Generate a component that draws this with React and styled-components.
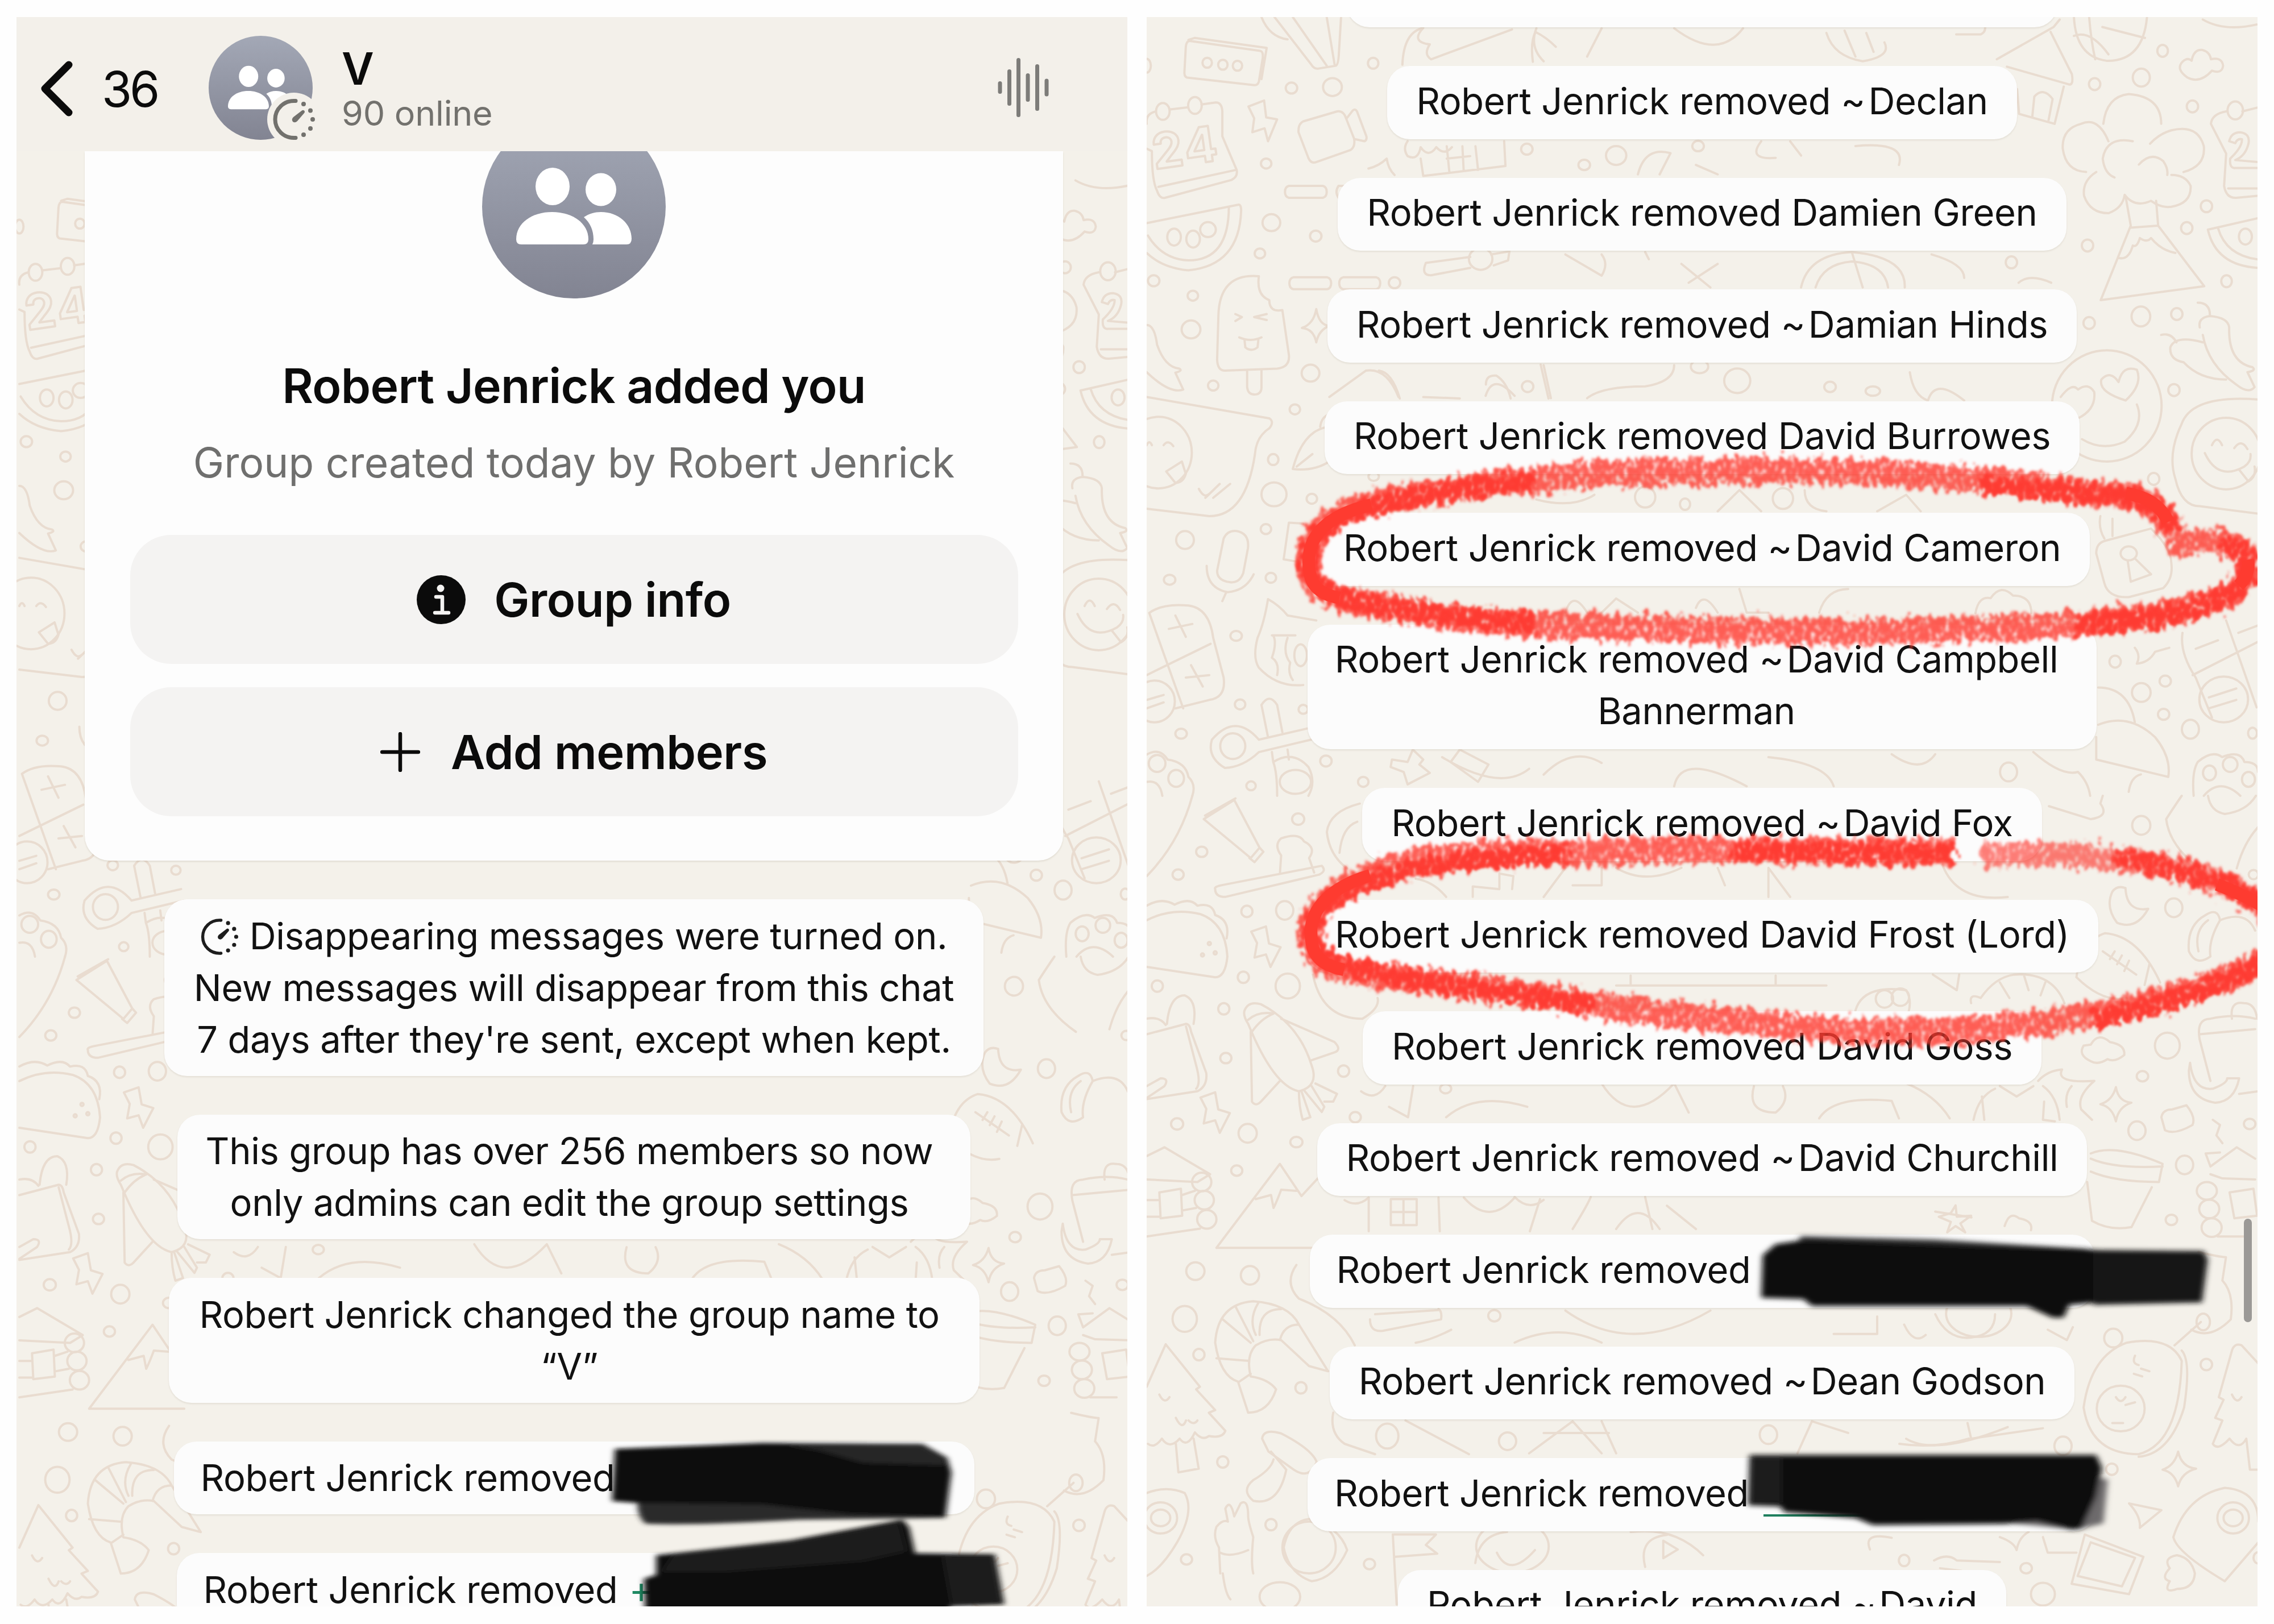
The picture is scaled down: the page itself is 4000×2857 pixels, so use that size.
/*--Import Packages--*/
import React from 'react'
import styled, { createGlobalStyle } from 'styled-components'

/*--Data--*/
const groupMessages = [
    { timer: true, lines: ['Disappearing messages were turned on.', 'New messages will disappear from this chat', "7 days after they're sent, except when kept."], width: 1441, center: true },
    { lines: ['This group has over 256 members so now', 'only admins can edit the group settings'], width: 1395, center: true, trail: 16 },
    { lines: ['Robert Jenrick changed the group name to', '“V”'], width: 1426, center: true, trail: 16 },
    { lines: ['Robert Jenrick removed'], width: 1408 },
    { lines: ['Robert Jenrick removed'], width: 1398, plus: true },
]

const removedMessages = [
    { lines: [''], width: 1250 },
    { lines: ['Robert Jenrick removed ~\u200aDeclan'] },
    { lines: ['Robert Jenrick removed Damien Green'] },
    { lines: ['Robert Jenrick removed ~\u200aDamian Hinds'] },
    { lines: ['Robert Jenrick removed David Burrowes'] },
    { lines: ['Robert Jenrick removed ~\u200aDavid Cameron'] },
    { lines: ['Robert Jenrick removed ~\u200aDavid Campbell', 'Bannerman'], width: 1388, center: true, trail: 20 },
    { lines: ['Robert Jenrick removed ~\u200aDavid Fox'] },
    { lines: ['Robert Jenrick removed David Frost (Lord)'] },
    { lines: ['Robert Jenrick removed David Goss'] },
    { lines: ['Robert Jenrick removed ~\u200aDavid Churchill'] },
    { lines: ['Robert Jenrick removed'], width: 1381 },
    { lines: ['Robert Jenrick removed ~\u200aDean Godson'] },
    { lines: ['Robert Jenrick removed'], width: 1388 },
    { lines: ['Robert Jenrick removed ~\u200aDavid'] },
]

/* Every doodle sheet has its own scale, dots are [cx, cy, rx, ry] */
const doodleSheets = [
    {
        transform: 'scale(.459 .8737)',
        dots: [[232, 92, 18, 10], [292, 96, 18, 10], [348, 98, 18, 10], [868, 93, 20, 11], [555, 143, 22, 11], [712, 141, 36, 18], [458, 295, 20, 10], [478, 414, 34, 17], [648, 441, 22, 11], [434, 476, 20, 10], [27, 531, 22, 11], [177, 561, 20, 10], [170, 629, 36, 18], [255, 742, 20, 10], [628, 717, 34, 17], [568, 790, 20, 10], [485, 891, 20, 11], [488, 961, 48, 24], [633, 970, 20, 10], [147, 1053, 34, 18], [457, 1031, 20, 10], [88, 1133, 22, 10], [476, 1129, 20, 10], [343, 1246, 22, 10], [358, 1384, 20, 10], [132, 1443, 22, 10], [600, 1394, 18, 9], [687, 1498, 22, 11], [830, 1540, 20, 10], [400, 1548, 18, 9], [0, 98, 16, 14], [1457, 266, 22, 11], [1460, 744, 22, 11], [870, 925, 20, 9], [950, 535, 22, 11], [62, 190, 26, 17], [185, 178, 26, 17], [105, 443, 26, 17], [178, 447, 26, 17], [235, 428, 30, 15], [45, 877, 128, 72], [30, 1378, 78, 42], [590, 1285, 24, 22], [330, 1468, 48, 26], [570, 1540, 60, 24], [40, 1503, 32, 17], [113, 1533, 30, 17], [1280, 487, 45, 22]],
        paths: [
            'M150 60Q152 48 165 48L435 68Q448 70 445 82L430 130Q425 138 412 137L155 122Q142 120 145 108ZM160 46L185 42L460 62L440 125',
            'M440 0Q470 40 540 45M490 0L630 95Q640 104 655 104L725 98Q735 96 737 70L745 0M560 0L690 98M690 0L720 95',
            'M0 265L20 270Q20 330 40 350Q50 366 70 364L325 328Q350 322 345 308L290 240L290 190Q288 172 265 172L210 176M155 182L90 186M35 190Q-5 195 0 215M45 342L340 308',
            'M390 180L450 168L458 202L500 206L465 250L452 224L405 232L412 204Z',
            'M582 232Q580 215 600 210L730 190Q755 188 765 205L795 245Q800 262 780 268L650 292Q630 296 620 284ZM765 205L790 188Q800 184 806 190L842 240Q845 248 835 250L800 246',
            'M545 340H675Q690 342 690 352Q690 362 675 364H545Q530 362 530 352Q530 342 545 340ZM735 340H820M735 364H820M735 340Q720 352 735 364',
            'M562 524H692Q707 526 707 536Q707 546 692 548H562Q547 546 547 536Q547 526 562 524ZM753 524H880Q895 526 895 536Q895 546 880 548H753Q738 546 738 536Q738 526 753 524Z',
            'M0 415L350 378Q362 376 362 390Q355 500 160 510Q60 505 0 475M315 382Q315 490 160 490Q60 488 5 440',
            'M430 522Q280 515 275 600L270 690Q272 712 300 712L500 708Q550 705 545 680L520 590Q470 595 470 570Q420 560 430 522ZM385 712L385 745Q388 760 412 760Q440 760 440 745L440 710M340 598L365 604L340 612M460 598L412 604L460 610M355 645Q400 655 440 645M375 650L378 665Q400 675 425 665L428 650',
            'M650 588Q660 620 700 622Q660 630 650 655Q640 628 595 626Q640 618 650 588',
            'M0 620Q30 620 40 660Q70 705 125 708Q140 712 110 716L140 750Q90 760 0 715',
            'M0 765L470 808Q490 815 470 828Q420 845 415 880Q380 1005 240 1005L0 990M0 862q10 -12 20 0M65 862Q82 850 102 864M75 915L135 895L150 920Q140 938 110 938ZM200 950Q220 970 240 960M225 968L280 940M255 968L320 940',
            'M560 910Q600 830 700 825M560 910Q640 915 700 895M575 905L635 880M665 825Q670 805 700 800M700 765L840 712Q920 705 965 765M890 712Q940 715 970 768',
            'M270 1115L295 1050Q310 1033 345 1035Q395 1040 388 1070L370 1120Q355 1140 320 1138Q270 1135 270 1115ZM230 1105Q230 1150 310 1158Q380 1155 410 1122M305 1158L290 1176M600 1020L545 1018L525 1092L570 1096',
            'M10 1200L140 1392M10 1200Q60 1180 160 1185Q240 1190 255 1250L295 1330Q305 1370 240 1375L110 1392M0 1325L245 1262M85 1232L175 1222M110 1205L150 1248M150 1330L240 1325M170 1305L215 1348M0 1375L65 1365M0 1392L65 1380',
            'M465 1172Q450 1220 425 1250Q405 1290 430 1310Q500 1350 600 1345M465 1172Q510 1185 540 1205L650 1215M480 1245L570 1245M485 1245Q500 1260 480 1290Q510 1300 500 1325M540 1250Q520 1280 550 1300Q540 1320 560 1335',
            'M430 1455Q340 1400 250 1455Q230 1490 300 1512Q370 1510 430 1480L630 1455M430 1455L620 1432M440 1385Q470 1360 500 1385L520 1440M440 1385L465 1450M480 1480L485 1500M540 1475L545 1495M485 1500Q560 1475 620 1510Q650 1540 620 1568M485 1500Q500 1520 500 1568',
            'M0 1485Q50 1470 80 1495Q150 1500 160 1530Q190 1545 175 1568M0 1540Q50 1535 60 1568',
            'M1000 250Q980 265 1000 280Q1040 290 1050 262Q1080 285 1110 262Q1140 280 1170 262M1050 285L1060 320L1375 300L1370 250M1150 260L1160 312M1210 260L1215 310M1260 260L1270 308M1150 285L1240 280M850 305Q890 300 920 285Q925 305 950 318',
            'M1070 495Q1050 520 1090 520L1240 505M1070 495L1240 483M1320 478L1390 472L1385 490L1330 500',
            'M980 96Q985 30 1060 22Q1010 50 1085 55Q1060 75 1090 85L1400 25M1480 90Q1470 50 1490 30Q1530 40 1568 60',
            'M1300 740Q1300 720 1340 722Q1380 735 1395 768M1510 700L1540 768M1060 765L1200 768',
            'M940 1495L1000 1500L1020 1475L1060 1495L1045 1505L1085 1522L1000 1545L985 1520L935 1510ZM1165 1500L1200 1475L1310 1505L1270 1540Z',
        ],
    },
    {
        transform: 'translate(1424 0) scale(.357 .8737)',
        dots: [[1017, 68, 26, 12], [682, 135, 28, 12], [912, 122, 42, 18], [1164, 180, 28, 12], [1233, 381, 28, 12], [1136, 425, 28, 12], [647, 460, 28, 12], [272, 494, 28, 12], [1332, 532, 26, 12], [655, 616, 28, 12], [910, 603, 46, 20], [1087, 598, 28, 12], [1073, 751, 28, 12], [973, 930, 28, 12], [783, 1298, 28, 12], [912, 1360, 46, 19], [1030, 1337, 28, 11], [1022, 1404, 28, 11], [1154, 1434, 42, 19], [258, 1520, 42, 19], [1460, 1442, 22, 11], [1375, 188, 38, 18], [1425, 442, 32, 16], [742, 783, 270, 112], [1330, 879, 170, 72], [850, 1080, 40, 14], [1318, 1374, 120, 46], [1248, 1522, 32, 15], [1350, 1505, 36, 15], [1440, 1535, 32, 15]],
        paths: [
            'M0 35L120 35Q150 30 140 15M200 85L480 20L510 5M465 30L570 115Q580 140 550 135L250 100M300 145L310 195L485 215L530 140M375 200L385 160Q430 140 475 165L455 208',
            'M580 0Q590 80 740 88Q920 90 940 0M580 38Q660 25 750 75M655 0Q665 50 685 85M720 20L930 42',
            'M1140 122Q1080 105 1115 90Q1140 80 1160 88Q1170 65 1210 66Q1250 70 1255 85Q1310 80 1315 98Q1310 115 1260 108Q1200 135 1140 122ZM1215 5Q1320 30 1480 15',
            'M1255 215Q1260 195 1330 190M1410 190L1487 182M1255 215L1330 275L1320 340Q1330 365 1380 364L1487 360M1340 345L1487 345',
            'M1345 250Q1355 232 1400 232Q1450 235 1440 255Q1425 280 1375 288L1487 292M1345 250L1375 254Q1385 244 1408 246Q1410 262 1350 285Q1345 305 1375 304L1487 304',
            'M750 250Q700 200 615 215Q520 225 525 265Q540 310 640 312M690 312Q620 330 630 360Q660 395 750 395Q820 385 830 358Q880 385 960 370Q1010 385 1060 382Q1160 375 1155 340Q1130 318 1060 318M1120 312Q1230 300 1220 260Q1190 215 1060 228Q1000 235 955 255M725 215Q740 160 850 155Q1010 160 1010 215M870 250Q740 240 722 285Q730 315 780 323M900 297Q960 270 1020 290Q1045 305 1040 318',
            'M835 362L860 420L712 570L1222 542L995 420L985 370M860 424L995 420M800 485Q850 490 870 460Q890 465 905 445Q940 455 960 445Q1010 470 1080 475',
            'M1240 428L1487 405M1240 428Q1280 500 1487 505M1290 425Q1330 480 1487 488',
            'M1190 575Q1250 575 1250 600M1200 625Q1190 605 1250 602Q1340 605 1345 625Q1340 695 1460 705Q1480 712 1435 715L1470 745Q1440 760 1380 740Q1240 700 1215 640M1010 640Q1060 635 1085 655M1215 655Q1080 640 1055 665Q1050 690 1120 695Q1200 730 1330 730',
            'M835 772Q700 755 715 730Q760 710 800 735Q820 700 890 710Q920 740 835 772M600 808Q690 790 680 755Q650 735 600 750Q570 735 515 765M890 780Q930 820 830 855Q720 875 620 850',
            'M1487 770Q1160 760 1110 820Q1040 880 1080 930Q1110 985 1200 985L1487 1000M1260 862Q1285 840 1310 862M1370 868Q1405 848 1435 870M1225 878Q1290 935 1420 905Q1455 895 1450 880M1395 912L1440 935Q1480 925 1470 905',
            'M690 1080Q690 1060 730 1055L960 1030Q1060 1070 1060 1100Q1070 1130 1020 1150L850 1168Q750 1170 730 1140ZM845 1095L860 1137L960 1122L880 1090M730 1050Q700 1030 710 1005M770 1045L770 1010',
            'M95 1200Q110 1165 170 1170Q220 1140 280 1165Q370 1165 370 1200M880 1270Q910 1285 890 1302Q950 1300 980 1278L1050 1270',
            'M1115 1240Q1100 1280 1180 1330L1260 1410M1165 1325L1487 1258M1330 1215L1480 1390M1180 1272L1290 1255M1245 1370L1380 1352M1245 1392L1380 1375M1390 1240L1487 1225',
            'M700 1350Q850 1350 880 1420M700 1425Q850 1400 980 1450Q1060 1490 1045 1530L690 1495L690 1450M380 1480Q520 1530 600 1520Q650 1540 660 1568M910 1525Q860 1530 850 1560',
            'M1170 1568Q1160 1520 1190 1500Q1260 1475 1310 1490Q1400 1475 1420 1500Q1487 1500 1487 1520M1220 1568Q1300 1530 1400 1568',
        ],
    },
    {
        transform: 'translate(0 1370) scale(.4464 .912)',
        dots: [[597, 45, 24, 11], [217, 108, 22, 10], [124, 152, 22, 10], [395, 223, 22, 11], [544, 221, 34, 18], [42, 367, 22, 11], [381, 350, 22, 11], [304, 411, 22, 11], [556, 367, 48, 24], [312, 506, 22, 10], [776, 531, 22, 11], [120, 633, 24, 11], [398, 651, 36, 18], [590, 668, 24, 10], [355, 723, 22, 10], [822, 620, 22, 10], [192, 917, 36, 17], [407, 925, 36, 18], [150, 1009, 48, 25], [206, 1078, 22, 11], [608, 1142, 22, 11], [300, 1285, 22, 11], [490, 1406, 22, 11], [157, 1473, 22, 10], [878, 1482, 22, 10], [1370, 1003, 24, 11], [1422, 1245, 34, 17], [1178, 565, 22, 9], [220, 307, 6, 3], [247, 285, 6, 3], [270, 303, 6, 3], [217, 745, 38, 18], [227, 780, 38, 18], [237, 817, 38, 18], [948, 1235, 44, 24], [55, 1393, 65, 30], [55, 1393, 38, 16], [640, 1450, 105, 50], [525, 1545, 80, 28]],
        paths: [
            'M180 0Q130 90 0 155M225 45L345 8L445 100L410 120ZM230 38L350 5M445 100L460 108L425 128L405 120',
            'M525 150L530 115Q500 95 530 82Q600 70 620 88Q670 100 640 120L660 148M270 180Q265 175 300 172L690 135Q710 145 680 152L310 195Q270 195 270 180M840 15Q720 30 710 70Q720 115 790 140M760 110Q770 60 830 50',
            'M0 212Q60 195 110 210Q170 195 200 212Q260 205 270 230Q330 240 315 275M0 240Q100 215 210 228Q310 245 318 310Q310 350 270 350L0 330',
            'M412 262L470 252L482 285L528 292L488 330L470 306L425 312L435 284Z',
            'M212 582L270 572L282 605L328 612L288 650L270 626L225 632L235 604Z',
            'M0 460L155 440Q170 440 175 455L235 535Q240 560 200 570L0 585M80 440Q90 385 150 385Q200 395 185 440M155 445L195 520Q215 555 195 565M0 560L55 545Q90 545 70 560L0 583M0 430Q50 425 75 442',
            'M385 415Q400 395 450 402Q600 440 650 520Q680 560 600 570Q500 560 400 440Q380 425 385 415M400 432Q440 415 500 420M415 455Q450 430 500 420M530 430L740 475Q770 490 740 495L650 510M410 455L415 590Q430 600 450 590L525 550M600 570Q600 600 615 625L645 620L610 570M620 568L690 610L700 600L650 560M665 555L750 575L735 590L700 590',
            'M0 695L70 678L250 730L200 745L0 740M50 765L135 758L140 810L55 815ZM0 850L210 835M0 780L45 780M140 770L190 762M0 812L50 812M140 800L195 795',
            'M275 872L525 710L610 772L680 735M275 872L650 872M430 778L490 770L500 795Q515 780 530 760L590 762',
            'M780 780Q830 795 875 775L875 840M1150 775L1155 840M962 778H1064V828H962ZM1012 778V828M962 803H1064M1250 775Q1350 830 1450 775M1550 778L1510 840',
            'M270 1055Q280 980 420 975Q560 980 600 1020L715 1110L640 1100L530 1050M270 1055Q290 1120 360 1130L400 1190Q480 1190 510 1145Q480 1125 410 1120Q390 1080 430 1060Q480 1045 530 1050M300 1010L410 1055M350 985L420 1052M440 978Q400 1010 430 1040M530 990Q440 990 445 1040M275 1085L400 1090M365 1130L410 1115M600 1020Q540 1020 525 1050M590 905Q540 940 600 970Q760 1000 820 1060',
            'M0 1140L75 1058L210 1140L195 1145L270 1185L245 1190L310 1225Q300 1240 245 1235Q220 1245 190 1228Q160 1260 130 1240Q90 1262 60 1240Q30 1260 5 1250M115 1250L125 1305L205 1298L185 1240M50 1155Q70 1175 90 1160M115 1200Q140 1225 155 1205M165 1205Q185 1215 200 1205',
            'M455 1240Q460 1220 530 1230Q650 1260 670 1285Q640 1320 580 1300L480 1265ZM490 1265L550 1300Q520 1370 420 1360Q370 1340 420 1320Q490 1300 500 1280M735 1190Q720 1230 780 1250L900 1270M1020 1205L1270 1270',
            'M0 1345Q80 1330 150 1345Q190 1380 120 1440Q60 1490 0 1505M290 1500L285 1450Q260 1430 275 1410Q300 1395 320 1400L310 1375Q330 1355 345 1390L370 1365Q400 1355 400 1390Q400 1400 420 1430Q410 1480 420 1500M290 1460Q330 1470 400 1455M300 1500Q310 1540 330 1550',
            'M540 1450Q560 1400 640 1395Q760 1410 790 1455Q740 1510 650 1515Q560 1500 540 1450M970 1425L985 1560M975 1425L1140 1425L1100 1445L1145 1462L980 1468M1295 1480Q1310 1425 1420 1420M1380 1460Q1430 1510 1530 1455',
            'M880 1010Q880 1035 930 1032L1160 1010Q1165 995 1150 990M900 1000L1150 992M1060 1055Q1120 1050 1200 1030M1180 620Q1300 570 1500 600M845 570Q900 590 940 560M955 600L1030 620L1050 560',
            'M1285 195L1285 175L1390 180L1390 150L1445 155L1440 180M1060 160Q1130 165 1180 195M655 345Q690 430 850 430Q920 410 910 390',
        ],
    },
    {
        transform: 'translate(1324 1370) scale(.4209 .912)',
        dots: [[1011, 57, 38, 18], [1480, 152, 20, 9], [1147, 216, 36, 18], [1120, 482, 52, 25], [1016, 541, 24, 10], [993, 646, 36, 18], [1192, 712, 36, 18], [1464, 633, 24, 10], [1137, 818, 24, 10], [894, 1046, 38, 18], [1283, 1097, 24, 11], [888, 1299, 24, 11], [530, 1490, 24, 10], [600, 1540, 50, 22], [684, 1254, 36, 18], [20, 1475, 22, 11], [1500, 1470, 20, 11], [1285, 762, 42, 17], [1295, 797, 42, 18], [1305, 833, 42, 18], [1270, 1015, 28, 16], [925, 1182, 100, 44], [1395, 1393, 66, 30], [1395, 1393, 40, 16]],
        paths: [
            'M625 20L800 45Q880 40 840 15L850 0M1180 0Q1150 20 1115 45Q1130 100 1270 145M1290 0Q1300 30 1360 35Q1450 30 1490 0M1500 60Q1440 90 1410 140',
            'M945 178Q950 225 1040 218Q990 260 910 245Q860 215 890 185Q910 172 945 178M1210 300Q1200 250 1280 230Q1330 215 1340 240Q1290 280 1300 310Q1240 330 1210 300ZM1250 300Q1230 260 1290 240M1340 240Q1450 220 1487 260',
            'M740 350Q760 280 860 265Q1000 270 1090 360M850 300L990 345M880 315L900 300M910 325L930 308M940 338L960 318M1045 325L1025 365M740 350Q850 400 950 390',
            'M300 400Q290 380 340 390Q400 350 480 345Q640 340 690 400M420 360L460 390M520 345L540 375M610 360L590 385M140 345L240 375L250 345',
            'M1255 470Q1240 430 1300 430Q1400 420 1487 430M1255 460L1487 450M1255 470L1300 550M1390 430Q1380 395 1440 400Q1487 400 1495 430M1420 575L1500 570',
            'M1215 515Q1230 570 1310 565Q1370 555 1370 545L1420 545Q1400 590 1320 592Q1210 585 1210 530Z',
            'M800 512Q745 500 770 482L800 480Q830 455 880 475Q945 480 940 500Q900 515 870 508Q830 520 800 512Z',
            'M310 625Q330 580 400 565M670 625Q660 580 600 560M420 560L490 580L560 560M345 580L355 625M605 590L600 625L650 628M580 550Q620 530 680 528Q650 555 815 550Q740 580 760 605L805 625M700 600Q690 575 720 560',
            'M905 562Q915 590 970 592Q915 600 905 628Q890 600 840 595Q890 588 905 562ZM1095 620Q1100 605 1140 605L1200 597Q1240 620 1225 635Q1150 655 1110 645Z',
            'M800 690Q900 670 1100 710L1085 745Q900 745 800 725M800 700Q900 720 1100 715M785 745L805 820Q880 840 970 832L1055 755',
            'M1280 690L1340 688M1280 690L1300 715L1410 678L1487 700M1300 730L1350 738L1487 740M1380 765L1480 758L1495 810L1400 815ZM1330 850L1440 850M1310 625L1340 635L1325 655L1350 670',
            'M235 790L240 812L300 810L255 825L275 842L235 830L200 842L215 822L165 812L215 805ZM440 830Q460 800 500 815Q560 820 550 838M1250 880Q1340 890 1365 890L1350 935Q1400 960 1385 1010Q1300 1050 1220 1030M1150 1060L1260 1015',
            'M770 1180Q800 1080 950 1055Q1130 1040 1180 1090Q1170 1250 1000 1270Q800 1270 770 1180ZM1180 1070Q1220 1090 1190 1180Q1130 1270 1000 1275M985 1080Q970 1095 1000 1098M980 1115L1015 1120M1010 1105L1045 1110M905 1160Q925 1175 945 1160M945 1175L985 1170M890 1210L935 1210',
            'M1500 1095L1430 1060Q1400 1055 1390 1070L1335 1160L1355 1165L1320 1200L1350 1205L1310 1250Q1330 1265 1380 1240Q1420 1265 1450 1240L1465 1300L1500 1300M1390 1155Q1410 1175 1430 1160',
            'M1165 1265Q1180 1295 1240 1298Q1180 1305 1165 1332Q1150 1305 1100 1300Q1150 1292 1165 1265ZM960 1365L1095 1378L1005 1412Q1010 1390 960 1365',
            'M1145 1430Q1200 1350 1360 1335Q1500 1340 1500 1400M1145 1430Q1160 1460 1360 1515L1500 1440M1160 1465Q1100 1470 1130 1490Q1090 1510 1130 1515Q1100 1540 1160 1530Q1230 1530 1235 1500Q1220 1470 1160 1465',
            'M775 1425L1020 1468L960 1540L720 1520ZM800 1440L985 1470L930 1525L745 1505ZM420 1430Q480 1440 490 1455Q500 1430 540 1420M600 1430L620 1460L740 1460M145 1475Q200 1460 240 1475L420 1478M170 1490L260 1495',
            'M0 1250Q150 1260 290 1240M285 1210L300 1240L600 1220M20 1020Q60 1060 110 1040M150 1000Q200 1050 300 1045Q400 1040 400 1000M620 1030L700 1050L725 1025',
        ],
    },
    {
        transform: 'translate(-16 -30) scale(1.2755 .829)',
        dots: [[660, 330, 14, 20], [773, 310, 8, 11], [616, 350, 8, 11], [827, 808, 18, 26], [955, 821, 8, 11], [775, 778, 12, 14], [1014, 830, 10, 10], [700, 1055, 14, 22], [755, 1070, 7, 12], [890, 1058, 14, 22]],
        paths: [
            'M915 610Q925 540 985 535Q1060 545 1058 610M935 610Q945 560 985 555Q1030 560 1035 610M985 535L1000 610M550 60Q540 100 560 130M640 60L620 120M740 60Q800 130 835 60M950 70Q960 120 1000 130Q1040 120 1030 90M975 65L990 120M1005 70L1015 110',
            'M690 370Q700 310 735 325L720 370M770 350L800 370M860 300Q840 340 880 335M900 300L915 330M990 310Q1060 300 1050 350M590 540L640 585Q650 560 640 540M700 535L705 550M750 560L790 610M800 560L760 600M1095 540Q1140 560 1140 590M1215 600Q1230 580 1260 600',
            'M480 840Q490 790 520 840M560 775L570 845M620 845Q640 820 700 820Q740 810 740 775M1065 790Q1070 840 1090 850Q1100 800 1140 850M550 1060Q600 1080 630 1050M800 1085L830 1040L860 1085M920 1040Q920 1080 950 1085M1020 1085L1060 1050L1080 1085',
            'M590 1300Q600 1250 620 1300M640 1300L660 1270L690 1300M770 1290Q780 1250 800 1300M830 1250L840 1300L870 1300M940 1300Q950 1250 980 1250',
        ],
    },
    {
        transform: 'translate(-16 1220) scale(1.2755 1.0249)',
        dots: [[1030, 495, 12, 15], [1052, 492, 12, 15], [1160, 1035, 45, 40], [870, 1243, 12, 16], [517, 1435, 50, 45]],
        paths: [
            'M740 130Q750 70 840 130M560 110Q600 60 640 90M870 80Q950 90 960 130M1040 75Q1080 110 1100 75M420 80Q500 140 540 100M560 320L590 270M660 270Q700 300 750 270M600 300h40v-30M870 320V270L900 320M800 270L810 300M1110 265Q1130 330 1200 320',
            'M660 472H950M680 455V470M880 455V472M990 515Q1000 470 1060 480Q1070 500 1060 530M640 640Q680 720 740 640L760 690M850 645Q840 690 880 690Q900 670 890 645M940 700Q960 660 1040 670L1050 700M1060 640Q1100 660 1120 700',
            'M600 890Q620 850 625 835M520 835Q540 860 560 840M660 890Q690 835 720 890M700 835L710 890M730 850L770 890M1100 860L1150 870M520 1085Q580 1050 640 1085M590 1030Q680 1110 790 1030M960 1070h60v-30',
            'M540 1275L600 1220L640 1275M640 1220L660 1275M560 1240H650M910 1275L930 1220L980 1240M1060 1250Q1100 1280 1200 1230M680 1410Q740 1400 780 1450M725 1425L745 1440L725 1455ZM700 1470Q690 1420 730 1415M1010 1440Q1000 1410 1040 1420',
        ],
    },
]

/*--Drawings--*/
const Wallpaper = ({ x = 0, y = 0 }) => (
    <Sheet viewBox="0 0 1954 2796">
        <g transform={`translate(${x} ${y})`} fill="none" stroke="#e9dcd0" strokeWidth="4" strokeLinejoin="round" strokeLinecap="round">
            {doodleSheets.map(sheet => (
                <g key={sheet.transform} transform={sheet.transform}>
                    {sheet.dots.map(([cx, cy, rx, ry]) => (
                        <ellipse key={`${cx}-${cy}-${rx}`} cx={cx} cy={cy} rx={rx} ry={ry} vectorEffect="non-scaling-stroke" />
                    ))}
                    {sheet.paths.map(d => <path key={d} d={d} vectorEffect="non-scaling-stroke" />)}
                </g>
            ))}
            <DoodleText x="14" y="268" transform="rotate(-8 14 268)">24</DoodleText>
        </g>
    </Sheet>
)

const PeopleIcon = ({ size, id }) => (
    <svg width={size} height={size} viewBox="0 0 323 323">
        <defs>
            <linearGradient id={id} x1="0" y1="0" x2="0" y2="1">
                <stop offset="0" stopColor="#a3a8b6" />
                <stop offset="1" stopColor="#828492" />
            </linearGradient>
        </defs>
        <circle cx="161.5" cy="161.5" r="161.5" fill={`url(#${id})`} />
        <g fill="#fff">
            <ellipse cx="124" cy="126" rx="30" ry="33" />
            <ellipse cx="209" cy="131.5" rx="27" ry="29" />
            <path d="M60 219C60 190 88 171 123 171S187 190 187 219Q187 228 178 228H69Q60 228 60 219Z" />
            <path d="M179 180C188 174 198 171 209 171C240 171 263 192 263 218Q263 228 254 228H194Q196 224 196 219C196 203 190 190 179 180Z" />
        </g>
    </svg>
)

const TimerIcon = ({ size, color, stroke = 7 }) => (
    <svg width={size} height={size} viewBox="-37 -37 74 74">
        <path d="M3 -32.5C-18 -34 -33 -18 -33 0S-18 34 3 32.5" fill="none" stroke={color} strokeWidth={stroke} strokeLinecap="round" />
        <g fill={color}>
            <circle cx="17" cy="-27" r="4" />
            <circle cx="29" cy="-15.5" r="4" />
            <circle cx="33" cy="0" r="4" />
            <circle cx="29" cy="16" r="4" />
            <circle cx="17" cy="27" r="4" />
            <path d="M18 -15.5Q20 -13.5 18 -11L6 3Q2 7 -2 4Q-5 0 -1 -4L14 -15.5Q16 -17 18 -15.5Z" />
        </g>
    </svg>
)

const BackIcon = () => (
    <svg width="68" height="110" viewBox="0 0 68 110">
        <path d="M55 13L13 55L55 97" fill="none" stroke="#0b0b0b" strokeWidth="13" strokeLinecap="round" strokeLinejoin="round" />
    </svg>
)

const waveBars = [[4, 21], [20.5, 63], [36.5, 103], [53, 49], [69.5, 81], [86, 30]]

const WaveIcon = () => (
    <svg width="90" height="110" viewBox="0 0 90 110">
        {waveBars.map(([x, h]) => (
            <path key={x} d={`M${x} ${55 - h / 2 + 3}V${55 + h / 2 - 3}`} stroke="#7d7c79" strokeWidth="7" strokeLinecap="round" />
        ))}
    </svg>
)

const InfoIcon = () => (
    <svg width="86" height="86" viewBox="0 0 86 86">
        <circle cx="43" cy="43" r="43" fill="#0b0b0b" />
        <circle cx="42" cy="23" r="6.5" fill="#f4f3f2" />
        <path d="M34 38H45V65M32 66H56" fill="none" stroke="#f4f3f2" strokeWidth="6.5" strokeLinecap="round" strokeLinejoin="round" />
    </svg>
)

const PlusIcon = () => (
    <svg width="70" height="70" viewBox="0 0 70 70">
        <path d="M35 3V67M3 35H67" stroke="#0b0b0b" strokeWidth="6.5" strokeLinecap="round" />
    </svg>
)

const LeftMarks = () => (
    <Overlay viewBox="0 0 1954 2796">
        <defs>
            <filter id="softLeft"><feGaussianBlur stdDeviation="4" /></filter>
        </defs>
        <g transform="translate(-29 1470) scale(1.2755 .8655)" filter="url(#softLeft)">
            <path d="M880 1310L1308 1300L1303 1352L1100 1356Q960 1368 890 1364Q876 1345 880 1310Z" fill="#2b2b2b" />
            <path d="M848 1212L1050 1200L1272 1202L1306 1230L1312 1260L1304 1350L1170 1345L1050 1325L880 1322L844 1318Z" fill="#0a0a0a" />
            <path d="M1080 1203L1270 1204L1302 1232L1304 1245L1190 1240L1130 1215Z" fill="#262627" />
            <path d="M905 1428L1090 1398L1245 1356L1254 1372L1262 1424L1372 1426L1385 1528L1310 1532L1310 1560L890 1560L888 1476L905 1468Z" fill="#0a0a0a" />
            <path d="M930 1424L1100 1400L1240 1362L1250 1420L1190 1440L1000 1462L912 1462Z" fill="#1c1c1b" />
            <path d="M1300 1430L1370 1430L1380 1524L1312 1528Z" fill="#1a1a1a" />
        </g>
    </Overlay>
)

const circleOne = 'M3822 936C3798 884 3758 866 3703 871C3620 862 3540 843 3418 840C3250 823 3000 825 2801 835C2660 848 2500 863 2412 888C2325 908 2302 950 2302 988C2302 1038 2335 1050 2412 1064C2560 1090 2680 1102 2913 1106C3100 1112 3300 1112 3531 1105C3700 1098 3880 1080 3930 1040C3960 1010 3962 985 3935 965C3900 948 3870 955 3815 955'
const circleTwo = 'M3436 1501C3200 1494 2950 1494 2801 1498C2620 1498 2480 1510 2434 1532C2350 1560 2306 1600 2306 1640C2306 1690 2336 1702 2404 1713C2560 1735 2700 1745 2801 1767C2960 1790 3180 1812 3330 1816C3500 1818 3700 1785 3800 1760C3880 1735 3950 1715 4000 1680'
const circleTwoTail = 'M3484 1505C3600 1498 3700 1505 3811 1523C3880 1538 3950 1570 4000 1610'

const RightMarks = () => (
    <Overlay viewBox="0 0 1954 2796">
        <defs>
            <filter id="softRight"><feGaussianBlur stdDeviation="4" /></filter>
            {/* chalky marker: rough edge and worn grain */}
            <filter id="crayon" filterUnits="userSpaceOnUse" x="2200" y="700" width="1900" height="1300">
                <feTurbulence type="fractalNoise" baseFrequency=".1 .06" numOctaves="2" seed="4" result="edge" />
                <feDisplacementMap in="SourceGraphic" in2="edge" scale="38" xChannelSelector="R" yChannelSelector="G" result="rough" />
                <feTurbulence type="fractalNoise" baseFrequency=".14 .08" numOctaves="2" seed="9" result="grain" />
                <feColorMatrix in="grain" type="matrix" values="0 0 0 0 0  0 0 0 0 0  0 0 0 0 0  3.2 0 0 0 -.55" result="mask" />
                <feComposite in="rough" in2="mask" operator="in" result="worn" />
                <feGaussianBlur in="worn" stdDeviation="2" />
            </filter>
        </defs>
        <g transform="translate(-2017 -30)" fill="none" stroke="#fe3b30" strokeLinecap="butt">
            <g filter="url(#crayon)">
                <path d={circleOne} strokeWidth="46" strokeOpacity=".82" />
                <path d={circleTwo} strokeWidth="46" strokeOpacity=".82" />
                <path d={circleTwoTail} strokeWidth="44" strokeOpacity=".66" />
            </g>
            <g filter="url(#crayon)" strokeWidth="34">
                <path d="M2700 846C2500 863 2325 890 2302 970C2290 1066 2400 1066 2700 1098" />
                <path d="M3480 850C3600 865 3640 865 3703 871C3758 866 3798 884 3822 936M3650 1098C3830 1090 3955 1060 3952 990C3948 968 3930 962 3905 958" />
                <path d="M3436 1501L3050 1497M2760 1500C2480 1510 2310 1560 2306 1640C2306 1710 2400 1710 2801 1767M3680 1795C3850 1755 3950 1715 4000 1680M3720 1510C3880 1530 3950 1570 4000 1610" />
            </g>
            <path d="M2412 888C2325 908 2302 950 2302 988C2302 1030 2320 1045 2356 1052M2410 1540C2340 1560 2306 1600 2306 1640C2306 1680 2322 1698 2364 1706M3740 868C3780 874 3802 892 3814 918M3938 1030Q3958 1010 3954 985M3900 1556Q3950 1575 3990 1600" strokeWidth="22" />
        </g>
        <path d="M1085 2636H1620" stroke="#1f7f5e" strokeWidth="4" />
        <g transform="translate(-16 1220) scale(1.2755 1.0249)" filter="url(#softRight)">
            <path d="M915 902L1100 908L1310 924L1300 940L900 930Z" fill="#3a3a3a" />
            <path d="M862 935L880 916L925 908L1110 916L1300 924L1324 926V1016L1285 1020L1277 1042L1262 1042L1226 1022L930 1022L918 1010L860 1008Z" fill="#070707" />
            <path d="M1318 926L1470 928L1476 942L1468 1016L1318 1020Z" fill="#151515" />
            <path d="M1295 1310L1338 1320L1332 1395L1296 1406L1195 1394Z" fill="#6d6b6c" />
            <path d="M844 1278H1322L1330 1300L1322 1350L1302 1404L1288 1406L1240 1392L1195 1396L1014 1398L990 1386L892 1376L886 1366L842 1364Z" fill="#080808" />
            <path d="M846 1282H888V1360H844Z" fill="#1d1d1d" />
        </g>
    </Overlay>
)

/*--Components--*/
const Message = ({ message }) => (
    <Bubble $width={message.width} $left={message.width && !message.center} $trail={message.trail}>
        {message.lines.map((line, i) => (
            <Line key={line}>
                {message.timer && i === 0 && <InlineIcon><TimerIcon size={66} color="#1d1d1d" stroke={6} /></InlineIcon>}
                {line}
                {message.plus && <Plus>+</Plus>}
            </Line>
        ))}
    </Bubble>
)

const GroupScreen = () => (
    <Screen>
        <Wallpaper x={5} y={283} />
        <Header>
            <BackIcon />
            <Unread>36</Unread>
            <AvatarWrapper>
                <PeopleIcon size={183} id="smallAvatar" />
                <Badge><TimerIcon size={74} color="#72716d" /></Badge>
            </AvatarWrapper>
            <Titles>
                <ChatName>V</ChatName>
                <Online>90 online</Online>
            </Titles>
            <WaveIcon />
        </Header>
        <Card>
            <PeopleIcon size={323} id="largeAvatar" />
            <CardTitle>Robert Jenrick added you</CardTitle>
            <CardText>Group created today by Robert Jenrick</CardText>
            <CardButton $gap={50}><InfoIcon />Group info</CardButton>
            <CardButton $gap={54}><PlusIcon />Add members</CardButton>
        </Card>
        <Messages $top={68} $shift={7}>
            {groupMessages.map((message, i) => <Message key={i} message={message} />)}
        </Messages>
        <LeftMarks />
    </Screen>
)

const RemovedScreen = () => (
    <Screen>
        <Wallpaper />
        <Messages $top={-110.5} $raise={3}>
            {removedMessages.map((message, i) => <Message key={i} message={message} />)}
        </Messages>
        <RightMarks />
        <ScrollThumb />
    </Screen>
)

const App = () => {
    return (
        <Page>
            <GlobalStyle />
            <GroupScreen />
            <RemovedScreen />
        </Page>
    )
}

export default App

const GlobalStyle = createGlobalStyle`
    * {
        box-sizing: border-box;
    }

    body {
        margin: 0;
        background: #fff;
        font-family: Inter, "Liberation Sans", sans-serif;
    }
`

const Page = styled.div`
    display: flex;
    gap: 34px;
    width: 4000px;
    height: 2857px;
    padding: 30px 29px 31px;
    background: #fefefe;
    overflow: hidden;
`

const Screen = styled.section`
    position: relative;
    display: flex;
    flex-direction: column;
    flex: none;
    width: 1954px;
    height: 2796px;
    background: #f4f1ea;
    overflow: hidden;
`

    const Sheet = styled.svg`
        position: absolute;
        inset: 0;
        width: 1954px;
        height: 2796px;
    `

        const DoodleText = styled.text`
            font: 700 86px Inter, sans-serif;
            letter-spacing: 4px;
        `

    const Overlay = styled(Sheet)`
        pointer-events: none;
    `

const Header = styled.header`
    position: relative;
    display: flex;
    align-items: center;
    flex: none;
    height: 236px;
    padding: 0 138px 0 37px;
    background: #f3f0ea;
    z-index: 1;

    > svg {
        flex: none;
        margin-bottom: 1px;
    }

    > svg:last-child {
        margin: 12px 0 0 auto;
    }

    > svg:first-child {
        margin-top: 16px;
    }
`

    const Unread = styled.span`
        width: 187px;
        padding-left: 45px;
        margin-top: 17px;
        color: #0b0b0b;
        font-size: 86px;
        line-height: 100px;
        letter-spacing: -4px;
    `

    const AvatarWrapper = styled.div`
        position: relative;
        width: 183px;
        height: 183px;
        margin: 12px 0 0 46px;

        > svg {
            display: block;
        }
    `

        const Badge = styled.div`
            position: absolute;
            left: 103px;
            top: 100px;
            display: grid;
            place-items: center;
            width: 94px;
            height: 94px;
            border-radius: 50%;
            background: #f3f0ea;
        `

    const Titles = styled.div`
        display: flex;
        flex-direction: column;
        margin: 22px 0 0 51px;
    `

        const ChatName = styled.strong`
            color: #0b0b0b;
            font-size: 78px;
            font-weight: 600;
            line-height: 80px;
        `

        const Online = styled.span`
            color: #72716d;
            font-size: 61px;
            line-height: 76px;
            letter-spacing: -.2px;
        `

const Card = styled.div`
    position: relative;
    display: flex;
    flex-direction: column;
    align-items: center;
    flex: none;
    width: 1721px;
    height: 1248px;
    margin-left: 120px;
    padding: 0 81px;
    border-radius: 0 0 44px 44px;
    background: #fdfdfd;
    box-shadow: 0 2px 3px rgba(90, 70, 40, .12);
    overflow: hidden;

    > svg {
        flex: none;
        margin-top: -64px;
    }
`

    const CardTitle = styled.h1`
        margin: 104px 0 0;
        color: #0b0b0b;
        font-size: 84px;
        font-weight: 600;
        line-height: 100px;
        letter-spacing: -.7px;
        white-space: nowrap;
    `

    const CardText = styled.p`
        margin: 40px 0 41px;
        color: #6f6f6e;
        font-size: 73px;
        line-height: 90px;
        letter-spacing: 0;
        white-space: nowrap;
    `

    const CardButton = styled.button`
        display: flex;
        align-items: center;
        justify-content: center;
        gap: ${props => props.$gap}px;
        flex: none;
        width: 1562px;
        height: 227px;
        margin: 41px 0 0;
        padding: 0;
        border: 0;
        border-radius: 72px;
        background: #f4f3f2;
        color: #0b0b0b;
        font: 600 83px Inter, "Liberation Sans", sans-serif;
        letter-spacing: -.4px;
    `

const Messages = styled.div`
    position: relative;
    display: flex;
    flex-direction: column;
    align-items: center;
    gap: 68px;
    margin-top: ${props => props.$top}px;
    padding-left: ${props => props.$shift || 0}px;

    > div {
        padding-top: ${props => 18.75 - (props.$raise || 0)}px;
        padding-bottom: ${props => 18.75 + (props.$raise || 0)}px;
    }
`

    const Bubble = styled.div`
        flex: none;
        width: ${props => props.$width ? `${props.$width}px` : 'auto'};
        padding-left: ${props => props.$left ? 47 : 51}px;
        padding-right: ${props => props.$width ? props.$trail || 0 : 51}px;
        ${props => props.$width && !props.$left && 'padding-left: 0;'}
        border-radius: 40px;
        background: #fcfcfc;
        box-shadow: 0 2px 3px rgba(90, 70, 40, .1);
        color: #111;
        font-size: 65px;
        letter-spacing: -.37px;
        text-align: ${props => props.$left ? 'left' : 'center'};
        white-space: nowrap;
    `

        const Line = styled.div`
            height: 91px;
            line-height: 91px;
        `

        const InlineIcon = styled.span`
            display: inline-block;
            height: 66px;
            margin-right: 20px;
            vertical-align: -11px;

            svg {
                display: block;
            }
        `

        const Plus = styled.span`
            margin-left: 20px;
            color: #1f8a63;
        `

const ScrollThumb = styled.div`
    position: absolute;
    left: 1930px;
    top: 2114px;
    width: 14px;
    height: 182px;
    border-radius: 7px;
    background: #9b9996;
`
